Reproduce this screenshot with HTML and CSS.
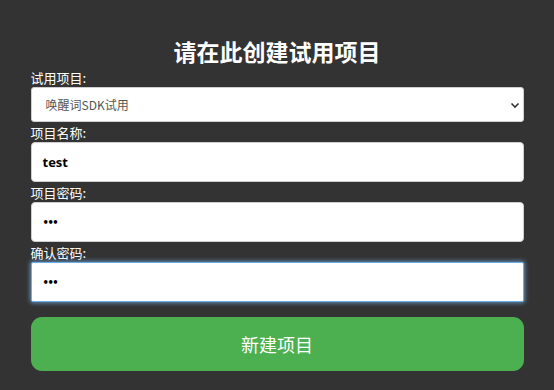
FILE: index.html
```html
<!DOCTYPE html>
<html lang="zh-CN">
<head>
<meta charset="utf-8">
<title>创建试用项目</title>
<link rel="stylesheet" href="styles.css">
</head>
<body>
<form class="form">
  <h1 class="title">请在此创建试用项目</h1>
  <label class="label">试用项目:</label>
  <div class="select-wrap">
    <div class="select">唤醒词SDK试用</div>
    <svg class="chev" width="10" height="7" viewBox="0 0 10 7"><path d="M1.5 1.5 L5 5 L8.5 1.5" fill="none" stroke="#333" stroke-width="1.6"/></svg>
  </div>
  <label class="label">项目名称:</label>
  <div class="input bold">test</div>
  <label class="label">项目密码:</label>
  <div class="input dots">•••</div>
  <label class="label">确认密码:</label>
  <div class="input dots focus">•••</div>
  <div class="button">新建项目</div>
</form>
</body>
</html>
```

FILE: styles.css
```css
html, body {
  margin: 0;
  padding: 0;
  background: #333333;
}
body {
  font-family: "Noto Sans CJK SC", "Noto Sans", sans-serif;
  padding-top: 36px;
}
.form {
  width: 493px;
  margin: 0 auto;
  display: flex;
  flex-direction: column;
}
.title {
  margin: 0;
  font-size: 23px;
  line-height: 31px;
  font-weight: 700;
  color: #ffffff;
  text-align: center;
}
.label {
  display: block;
  color: #ffffff;
  font-size: 13px;
  line-height: 16px;
  margin: 3px 0 1px;
}
.select-wrap {
  position: relative;
}
.select {
  box-sizing: border-box;
  height: 35px;
  background: #fff;
  border: 1px solid #cfcfcf;
  border-radius: 3px;
  padding-left: 14px;
  display: flex;
  align-items: center;
  font-size: 12px;
  color: #555;
}
.chev {
  position: absolute;
  right: 4px;
  top: 15px;
}
.input {
  box-sizing: border-box;
  height: 40px;
  background: #fff;
  border: 1px solid #cfcfcf;
  border-radius: 4px;
  padding-left: 11px;
  display: flex;
  align-items: center;
  font-family: "Open Sans", "Noto Sans", sans-serif;
  font-size: 13px;
  color: #000;
}
.bold {
  font-weight: 700;
}
.dots {
  font-family: "DejaVu Sans", sans-serif;
  font-size: 10px;
  font-weight: 700;
  letter-spacing: -1.5px;
}
.focus {
  border: 1px solid #6aaee8;
  border-radius: 2px;
  box-shadow: 0 0 4px 1px rgba(120, 180, 235, 0.7);
}
.button {
  margin-top: 15px;
  height: 54px;
  border-radius: 11px;
  background: #4caf50;
  color: #fff;
  font-size: 18px;
  display: flex;
  align-items: center;
  justify-content: center;
}
```
